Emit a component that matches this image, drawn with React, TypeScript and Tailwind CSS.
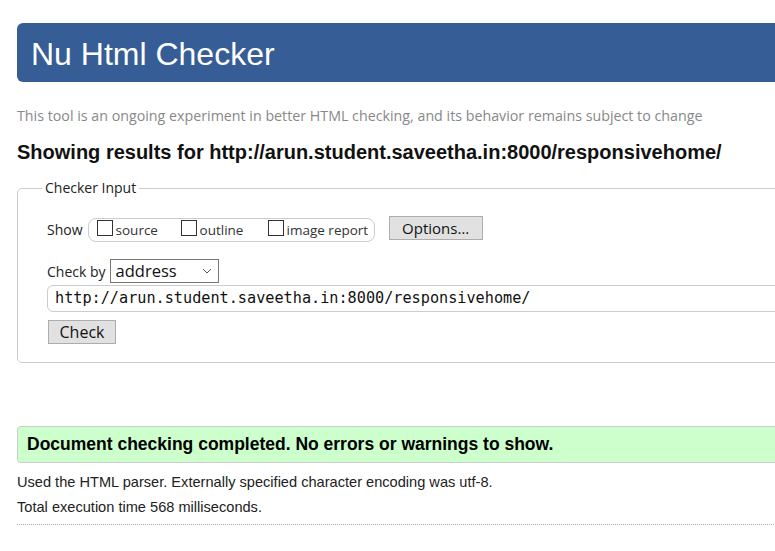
import React from "react";

const segoe = { fontFamily: '"Open Sans", "Noto Sans", sans-serif' };

function Box({ label }: { label: string }) {
  return (
    <label className="flex items-center">
      <span className="inline-block w-[16px] h-[16px] border border-[#333] bg-white mr-[3px] mt-[-4px]" />
      <span className="text-[13.5px] text-[#333] leading-none mt-[2px]">{label}</span>
    </label>
  );
}

export default function App() {
  return (
    <div className="w-[775px] h-[551px] overflow-hidden bg-white" style={{ fontFamily: '"Liberation Sans", Arial, sans-serif' }}>
      <div className="w-[820px] pl-[17px] pt-[23px]">
        <div className="h-[59px] bg-[#365d95] rounded-[6px] flex items-center pl-[14px]">
          <h1 className="text-white text-[32px] leading-none font-normal mt-[2px]">Nu Html Checker</h1>
        </div>

        <p className="mt-[25px] text-[14.25px] text-[#888] leading-[18px]" style={segoe}>
          This tool is an ongoing experiment in better HTML checking, and its behavior remains subject to change
        </p>

        <h2 className="mt-[15px] text-[20px] font-bold text-[#111] leading-[24px]">
          Showing results for http://arun.student.saveetha.in:8000/responsivehome/
        </h2>

        <div className="relative mt-[24px] h-[175px] border border-[#ccc] rounded-[5px]">
          <div className="absolute left-[24px] top-[-10px] bg-white px-[3px] text-[14px] text-[#222] leading-[18px]" style={segoe}>
            Checker Input
          </div>
          <div className="pl-[29px] pt-[27px]" style={segoe}>
            <div className="flex items-center h-[27px]">
              <span className="text-[14px] text-[#222] mr-[5px]">Show</span>
              <div className="flex items-center h-[24px] w-[287px] border border-[#ccc] rounded-[8px] pl-[8px] gap-[0px]">
                <div className="w-[84px]"><Box label="source" /></div>
                <div className="w-[87px]"><Box label="outline" /></div>
                <Box label="image report" />
              </div>
              <button className="ml-[14px] mt-[-3px] h-[24px] w-[94px] bg-[#e1e1e1] border border-[#adadad] text-[15px] text-[#111] leading-none">
                Options…
              </button>
            </div>
            <div className="flex items-center mt-[16px] h-[24px]">
              <span className="text-[14px] text-[#222] mr-[4px]">Check by</span>
              <div className="h-[24px] w-[109px] border border-[#767676] flex items-center justify-between pl-[5px] pr-[6px]">
                <span className="text-[16.5px] text-[#111] leading-none">address</span>
                <svg width="10" height="6" viewBox="0 0 10 6"><path d="M1 1l4 4 4-4" fill="none" stroke="#555" strokeWidth="1" /></svg>
              </div>
            </div>
            <div className="mt-[2px] h-[27px] border border-[#ccc] rounded-[6px] flex items-center pl-[7px]">
              <span className="text-[15.2px] text-[#111] leading-none" style={{ fontFamily: '"DejaVu Sans Mono", "Liberation Mono", monospace' }}>
                http://arun.student.saveetha.in:8000/responsivehome/
              </span>
            </div>
            <button className="mt-[8px] ml-[1px] h-[24px] w-[68px] bg-[#e1e1e1] border border-[#adadad] text-[16px] text-[#111] leading-none">
              Check
            </button>
          </div>
        </div>

        <div className="mt-[63px] h-[37px] bg-[#ccffcc] border border-[#ccc] rounded-[4px] flex items-center pl-[9px]">
          <span className="text-[17.5px] font-bold text-black leading-none">Document checking completed. No errors or warnings to show.</span>
        </div>

        <p className="mt-[10px] text-[14.6px] text-[#222] leading-[18px]">Used the HTML parser. Externally specified character encoding was utf-8.</p>
        <p className="mt-[7px] text-[14.6px] text-[#222] leading-[18px]">Total execution time 568 milliseconds.</p>
        <div className="mt-[8px] border-t border-dotted border-[#aaa]" />
      </div>
    </div>
  );
}
